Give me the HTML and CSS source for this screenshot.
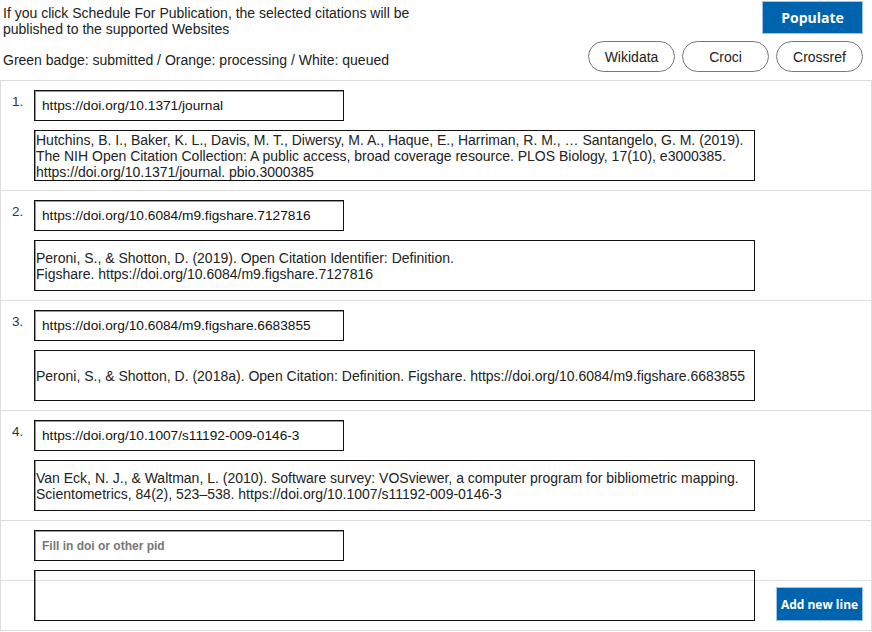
FILE: index.html
```html
<!DOCTYPE html>
<html lang="en">
<head>
<meta charset="utf-8">
<title>Citations</title>
<link rel="stylesheet" href="styles.css">
</head>
<body>
<div class="page">
  <header class="header">
    <div class="intro">
      <p>If you click Schedule For Publication, the selected citations will be published to the supported Websites</p>
      <p>Green badge: submitted / Orange: processing / White: queued</p>
    </div>
    <div class="actions">
      <button class="btn-primary populate">Populate</button>
      <div class="pills">
        <button class="pill">Wikidata</button>
        <button class="pill">Croci</button>
        <button class="pill">Crossref</button>
      </div>
    </div>
  </header>

  <div class="list">
    <div class="row">
      <div class="num">1.</div>
      <div class="fields">
        <input class="pid" type="text" value="https://doi.org/10.1371/journal">
        <div class="cite">Hutchins, B. I., Baker, K. L., Davis, M. T., Diwersy, M. A., Haque, E., Harriman, R. M., … Santangelo, G. M. (2019). The NIH Open Citation Collection: A public access, broad coverage resource. PLOS Biology, 17(10), e3000385. https://doi.org/10.1371/journal. pbio.3000385</div>
      </div>
    </div>
    <div class="row">
      <div class="num">2.</div>
      <div class="fields">
        <input class="pid" type="text" value="https://doi.org/10.6084/m9.figshare.7127816">
        <div class="cite">Peroni, S., &amp; Shotton, D. (2019). Open Citation Identifier: Definition.<br>Figshare. https://doi.org/10.6084/m9.figshare.7127816</div>
      </div>
    </div>
    <div class="row">
      <div class="num">3.</div>
      <div class="fields">
        <input class="pid" type="text" value="https://doi.org/10.6084/m9.figshare.6683855">
        <div class="cite">Peroni, S., &amp; Shotton, D. (2018a). Open Citation: Definition. Figshare. https://doi.org/10.6084/m9.figshare.6683855</div>
      </div>
    </div>
    <div class="row">
      <div class="num">4.</div>
      <div class="fields">
        <input class="pid" type="text" value="https://doi.org/10.1007/s11192-009-0146-3">
        <div class="cite">Van Eck, N. J., &amp; Waltman, L. (2010). Software survey: VOSviewer, a computer program for bibliometric mapping. Scientometrics, 84(2), 523–538. https://doi.org/10.1007/s11192-009-0146-3</div>
      </div>
    </div>
    <div class="row row-new">
      <div class="num"></div>
      <div class="fields">
        <input class="pid" type="text" placeholder="Fill in doi or other pid">
        <textarea class="cite cite-empty"></textarea>
      </div>
    </div>
    <div class="row row-footer">
      <button class="btn-primary add">Add new line</button>
    </div>
  </div>
</div>
</body>
</html>
```

FILE: styles.css
```css
* { box-sizing: border-box; }

body {
  margin: 0;
  background: #fff;
  font-family: "Liberation Sans", Arial, sans-serif;
  color: #222;
}

.page {
  width: 872px;
}

.header {
  display: flex;
  justify-content: space-between;
  height: 80px;
}

.intro {
  padding: 5px 0 0 3px;
  width: 430px;
  font-size: 14px;
  line-height: 16px;
}

.intro p {
  margin: 0 0 15px 0;
}

.actions {
  display: flex;
  flex-direction: column;
  align-items: flex-end;
  padding: 1px 9px 0 0;
  gap: 7px;
}

.btn-primary {
  background: #0063ad;
  color: #fff;
  border: 1px solid #9cc4ea;
  font-family: "Open Sans", "Liberation Sans", sans-serif;
  font-weight: 700;
  cursor: pointer;
  padding: 0;
}

.populate {
  width: 101px;
  height: 33px;
  font-size: 14px;
}

.pills {
  display: flex;
  gap: 7px;
}

.pill {
  width: 87px;
  height: 31px;
  border: 1px solid #777;
  border-radius: 16px;
  background: #fff;
  color: #222;
  font-family: "Liberation Sans", Arial, sans-serif;
  font-size: 14px;
  padding: 0;
}

.list {
  border: 1px solid #dedede;
  border-bottom: none;
  width: 872px;
}

.row {
  display: flex;
  padding: 9px 0;
  border-bottom: 1px solid #dedede;
}

.num {
  width: 33px;
  flex-shrink: 0;
  padding: 4px 0 0 11px;
  font-size: 13.5px;
  line-height: 16px;
  color: #333;
}

.fields {
  display: flex;
  flex-direction: column;
  gap: 9px;
}

.pid {
  flex-shrink: 0;
  width: 310px;
  height: 31px;
  margin: 0;
  padding: 0 7px;
  border: 1px solid #111;
  box-shadow: inset 1px 1px 0 #999;
  font-family: "Liberation Sans", Arial, sans-serif;
  font-size: 13.7px;
  color: #111;
  background: #fff;
  outline: none;
}

.pid::placeholder {
  color: #777;
  font-weight: 700;
  font-size: 12px;
}

.cite {
  flex-shrink: 0;
  width: 721px;
  height: 51px;
  display: flex;
  align-items: center;
  padding: 0 1px;
  border: 1px solid #111;
  box-shadow: inset 1px 0 0 #999;
  font-size: 14px;
  line-height: 16px;
  color: #222;
}

.cite-empty {
  display: block;
  margin: 0;
  background: transparent;
  resize: none;
  font-family: "Liberation Sans", Arial, sans-serif;
  outline: none;
}

.row-new {
  height: 60px;
}

.row-footer {
  height: 50px;
  padding: 6px 8px 0 0;
  justify-content: flex-end;
  align-items: flex-start;
}

.add {
  width: 87px;
  height: 34px;
  font-size: 12px;
}
```
